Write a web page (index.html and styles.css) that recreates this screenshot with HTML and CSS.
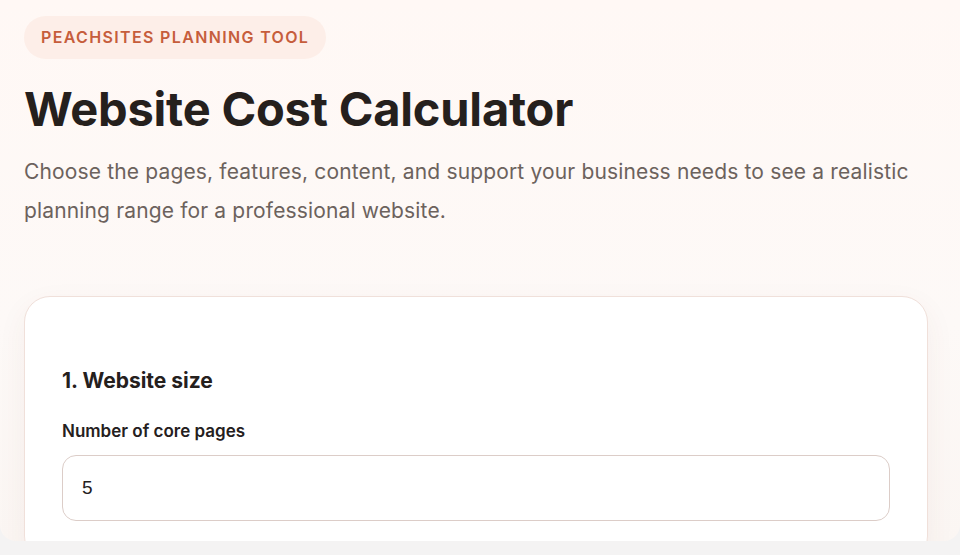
FILE: index.html
```html
<!DOCTYPE html>
<html lang="en">
<head>
    <meta charset="UTF-8">
    <meta name="viewport" content="width=device-width, initial-scale=1.0">
    <title>Website Cost Calculator</title>
    <link rel="stylesheet" href="styles.css">
</head>
<body>

    <div class="page">
        <header class="intro">
            <span class="badge">Peachsites Planning Tool</span>
            <h1>Website Cost Calculator</h1>
            <p>Choose the pages, features, content, and support your business needs to see a realistic planning range for a professional website.</p>
        </header>

        <section class="card">
            <h2>1. Website size</h2>

            <label for="pages">Number of core pages</label>
            <input type="number" id="pages" value="5" min="1">
        </section>
    </div>

</body>
</html>
```

FILE: styles.css
```css
body {
    font-family: 'Inter', 'Liberation Sans', sans-serif;
    background-color: #f4f3f3;
    margin: 0;
    padding: 0;
}

.page {
    height: 541px;
    overflow: hidden;
    border-radius: 0 0 16px 16px;
    background: linear-gradient(180deg, #fff8f5 0%, #fdf9f7 60%, #fbf6f3 100%);
    padding: 0 32px 0 24px;
}

.intro {
    padding-top: 16px;
}

.badge {
    display: inline-block;
    background-color: #fdeee8;
    color: #c65d3c;
    font-size: 16px;
    font-weight: 600;
    letter-spacing: 1.35px;
    text-transform: uppercase;
    padding: 12px 17px;
    border-radius: 22px;
    line-height: 19px;
}

h1 {
    color: #25201d;
    font-size: 47px;
    font-weight: 700;
    letter-spacing: -0.2px;
    margin: 22px 0 15px;
    line-height: 56px;
}

.intro p {
    color: #6c625d;
    font-size: 21px;
    letter-spacing: 0.15px;
    line-height: 39px;
    margin: 0;
    max-width: 904px;
}

.card {
    background-color: #fff;
    border: 1px solid #f0e0da;
    border-radius: 26px;
    box-shadow: 0 10px 30px rgba(120, 70, 50, 0.06);
    margin-top: 66px;
    padding: 70px 37px 40px;
}

h2 {
    color: #25201d;
    font-size: 21px;
    font-weight: 700;
    margin: 0 0 25px;
    line-height: 28px;
}

label {
    display: block;
    color: #25201d;
    font-size: 17px;
    font-weight: 600;
    margin-bottom: 13px;
    line-height: 22px;
}

input[type="number"] {
    display: block;
    width: 100%;
    box-sizing: border-box;
    height: 66px;
    padding: 0 19px;
    border: 1px solid #dccdc8;
    border-radius: 14px;
    font-family: 'Liberation Sans', sans-serif;
    font-size: 19px;
    color: #25201d;
    background-color: #fff;
    -moz-appearance: textfield;
}

input[type="number"]::-webkit-inner-spin-button,
input[type="number"]::-webkit-outer-spin-button {
    -webkit-appearance: none;
    margin: 0;
}
```
